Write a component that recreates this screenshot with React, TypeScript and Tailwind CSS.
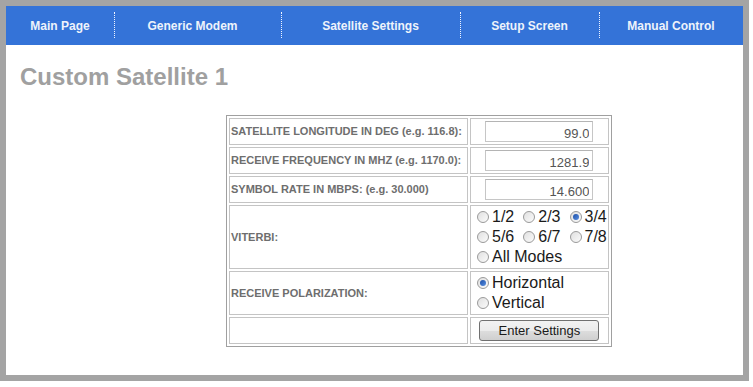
import React from "react";

function Radio({ checked }: { checked?: boolean }) {
  return (
    <span className="inline-flex items-center justify-center w-[12px] h-[12px] ml-[5px] mr-[3px] rounded-full border border-[#9a9a9a] bg-gradient-to-br from-[#e0e0e0] to-[#fbfbfb] shrink-0">
      {checked ? (
        <span className="block w-[6px] h-[6px] rounded-full bg-gradient-to-br from-[#1b4fa8] to-[#5a8fe0]" />
      ) : null}
    </span>
  );
}

function Opt({ label, checked, last }: { label: string; checked?: boolean; last?: boolean }) {
  return (
    <span className={`inline-flex items-center ${last ? "" : "mr-[4px]"}`}>
      <Radio checked={checked} />
      <span>{label}</span>
    </span>
  );
}

const navItems = [
  { label: "Main Page", w: "w-[108px]", extra: "" },
  { label: "Generic Modem", w: "w-[167px]", extra: "pr-[10px]" },
  { label: "Satellite Settings", w: "w-[179px]", extra: "" },
  { label: "Setup Screen", w: "w-[139px]", extra: "" },
  { label: "Manual Control", w: "w-[144px]", extra: "" },
];

function Input({ value }: { value: string }) {
  return (
    <input
      readOnly
      value={value}
      className="block mx-auto w-[108px] h-[21px] border border-[#c6c6c6] border-t-[#b4b4b4] bg-white text-right pr-[3px] pt-[3px] text-[13px] leading-[16px] text-[#555] outline-none font-['Liberation_Sans',Arial,sans-serif]"
    />
  );
}

export default function App() {
  const label =
    "border border-[#c4c4c4] px-px py-0 text-[11px] font-bold text-[#6e6e6e] align-middle whitespace-nowrap";
  const val = "border border-[#c4c4c4] p-px align-middle";
  return (
    <div className="font-['Liberation_Sans',Arial,sans-serif]">
      <div className="w-[749px] h-[381px] border-[6px] border-[#a4a4a4] bg-white flex flex-col">
        <nav className="h-[39px] bg-[#3473d8] flex items-stretch shrink-0">
          {navItems.map((n, i) => (
            <div key={n.label} className={`${n.w} flex items-center relative`}>
              {i > 0 ? (
                <span className="absolute left-0 top-[6px] h-[26px] border-l border-dotted border-[#f0f4ff]" />
              ) : null}
              <span
                className={`flex-1 text-center text-[12px] font-bold text-[#eef3fb] ${n.extra}`}
              >
                {n.label}
              </span>
            </div>
          ))}
        </nav>
        <h1 className="mt-[18px] ml-[14px] text-[24px] leading-[28px] font-bold text-[#a0a0a0]">
          Custom Satellite 1
        </h1>
        <div className="mt-[24px] ml-[220px]">
          <table className="border-separate border-spacing-[2px] border border-[#a0a0a0]">
            <tbody>
              <tr className="h-[27px]">
                <td className={`${label} w-[239px]`}>SATELLITE LONGITUDE IN DEG (e.g. 116.8):</td>
                <td className={`${val} w-[138px]`}>
                  <Input value="99.0" />
                </td>
              </tr>
              <tr className="h-[27px]">
                <td className={label}>RECEIVE FREQUENCY IN MHZ (e.g. 1170.0):</td>
                <td className={val}>
                  <Input value="1281.9" />
                </td>
              </tr>
              <tr className="h-[27px]">
                <td className={label}>SYMBOL RATE IN MBPS: (e.g. 30.000)</td>
                <td className={val}>
                  <Input value="14.600" />
                </td>
              </tr>
              <tr>
                <td className={label}>VITERBI:</td>
                <td className={`${val} text-[16px] leading-[20px] text-[#1a1a1a]`}>
                  <div className="flex items-center whitespace-nowrap">
                    <Opt label="1/2" />
                    <Opt label="2/3" />
                    <Opt label="3/4" checked last />
                  </div>
                  <div className="flex items-center whitespace-nowrap">
                    <Opt label="5/6" />
                    <Opt label="6/7" />
                    <Opt label="7/8" last />
                  </div>
                  <div className="flex items-center whitespace-nowrap">
                    <Opt label="All Modes" last />
                  </div>
                </td>
              </tr>
              <tr>
                <td className={label}>RECEIVE POLARIZATION:</td>
                <td className={`${val} text-[16px] leading-[20px] text-[#1a1a1a]`}>
                  <div className="flex items-center">
                    <Opt label="Horizontal" checked last />
                  </div>
                  <div className="flex items-center">
                    <Opt label="Vertical" last />
                  </div>
                </td>
              </tr>
              <tr className="h-[27px]">
                <td className={label}></td>
                <td className={val}>
                  <button className="flex mx-auto items-center justify-center w-[120px] h-[21px] rounded-[3px] border border-[#707070] bg-[linear-gradient(to_bottom,#f2f2f2_0%,#ebebeb_50%,#dddddd_51%,#cfcfcf_100%)] text-[13px] text-[#1a1a1a] leading-none">
                    Enter Settings
                  </button>
                </td>
              </tr>
            </tbody>
          </table>
        </div>
      </div>
    </div>
  );
}
